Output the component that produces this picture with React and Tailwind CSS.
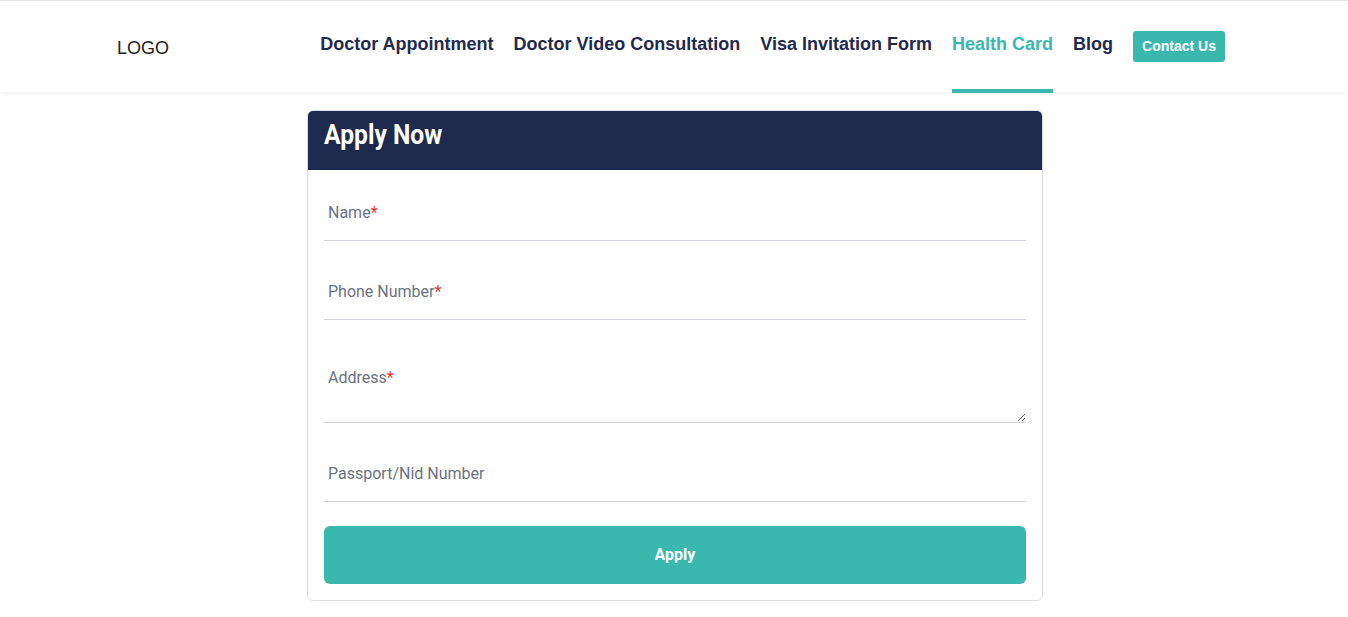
import React from "react";

const navy = "text-[#1f2a4e]";

function Field({ label, required, textarea }) {
  return (
    <div className="relative">
      {textarea ? (
        <textarea
          rows={3}
          className="block w-full h-[78px] border-0 border-b border-[#d1d5db] outline-none px-1 pt-6 text-[16px] resize-y"
        />
      ) : (
        <input className="block w-full h-[54px] border-0 border-b border-[#d1d5db] outline-none px-1 text-[16px]" />
      )}
      <span
        className={`pointer-events-none absolute left-1 text-[16px] text-[#6b7280] ${
          textarea ? "top-[23px]" : "top-[16px]"
        } leading-[20px]`}
      >
        {label}
        {required && <span className="text-[#e3342f]">*</span>}
      </span>
    </div>
  );
}

export default function App() {
  const links = [
    "Doctor Appointment",
    "Doctor Video Consultation",
    "Visa Invitation Form",
    "Health Card",
    "Blog",
  ];
  return (
    <div className="min-h-[617px] bg-white" style={{ fontFamily: "Roboto, sans-serif" }}>
      <header className="border-t border-[#e2e5ea] h-[92px] bg-white shadow-[0_2px_4px_rgba(0,0,0,0.06)] relative z-10">
        <div className="flex h-full items-center justify-between pl-[117px] pr-[123px]">
          <div
            className="text-[18px] text-[#222] pt-[4px]"
            style={{ fontFamily: "'Liberation Sans', Arial, sans-serif" }}
          >
            LOGO
          </div>
          <nav
            className="flex h-full items-center gap-5 pl-[1px]"
            style={{ fontFamily: "'Liberation Sans', Arial, sans-serif" }}
          >
            {links.map((l) => (
              <a
                key={l}
                className={`relative flex h-full items-center pb-[5px] text-[18px] font-bold ${
                  l === "Health Card" ? "text-[#3bb8ae]" : navy
                }`}
              >
                {l}
                {l === "Health Card" && (
                  <span className="absolute left-0 right-0 bottom-[-1px] h-[4px] bg-[#3bb8ae]" />
                )}
              </a>
            ))}
            <button className="h-[31px] w-[92px] rounded-[3px] bg-[#3bb8ae] text-[14px] font-bold text-white">
              Contact Us
            </button>
          </nav>
        </div>
      </header>

      <main className="pt-[18px] pb-4 pl-[2px]">
        <div className="mx-auto w-[736px] rounded-[6px] border border-[#dedede] overflow-hidden">
          <div className="bg-[#1e2a4d] h-[60px] -mt-[1px] mb-[1px] flex items-center px-4">
            <h2 className="text-[28px] font-bold text-white scale-x-[0.88] origin-left pb-[10px]">Apply Now</h2>
          </div>
          <div className="px-4 pt-[16px] pb-[16px] flex flex-col gap-[25px]">
            <Field label="Name" required />
            <Field label="Phone Number" required />
            <Field label="Address" required textarea />
            <Field label="Passport/Nid Number" />
            <button className="-mt-[1px] h-[58px] w-full rounded-[6px] bg-[#3bb8ae] text-white text-[16px] font-bold">
              Apply
            </button>
          </div>
        </div>
      </main>
    </div>
  );
}
